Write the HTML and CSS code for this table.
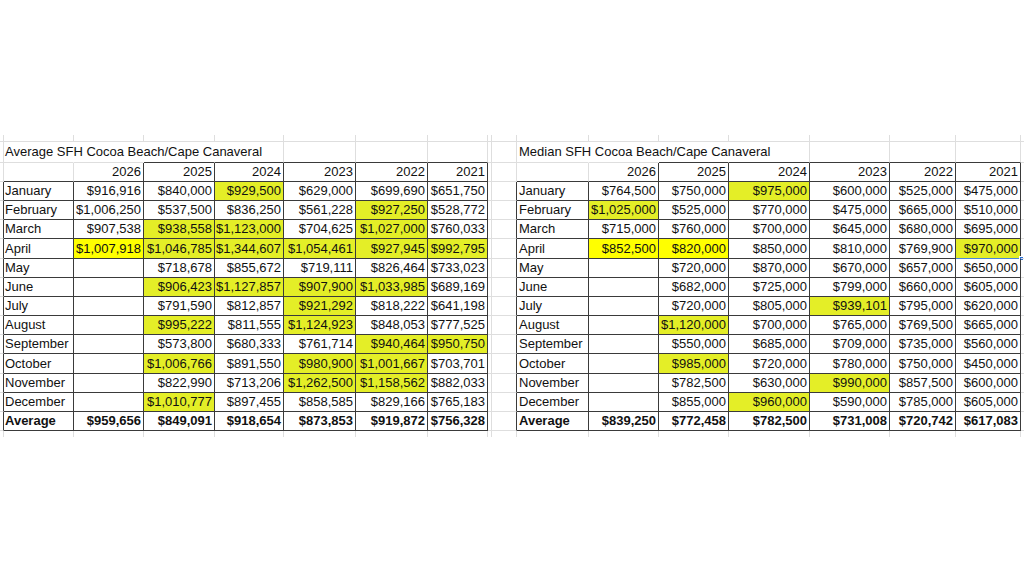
FILE: index.html
```html
<!DOCTYPE html>
<html>
<head>
<meta charset="utf-8">
<link rel="stylesheet" href="styles.css">
</head>
<body>
<div class="sheet">
  <div class="blk L">
    <div class="r s"><div></div><div></div><div></div><div></div><div></div><div></div><div></div><div></div><div></div></div>
    <div class="r t"><div></div><div>Average SFH Cocoa Beach/Cape Canaveral</div><div></div><div></div><div></div><div></div><div></div><div></div><div></div></div>
    <div class="r h"><div></div><div></div><div>2026</div><div>2025</div><div>2024</div><div>2023</div><div>2022</div><div>2021</div><div></div></div>
    <div class="r d"><div></div><div>January</div><div>$916,916</div><div>$840,000</div><div class="y">$929,500</div><div>$629,000</div><div>$699,690</div><div>$651,750</div><div></div></div>
    <div class="r d"><div></div><div>February</div><div>$1,006,250</div><div>$537,500</div><div>$836,250</div><div>$561,228</div><div class="y">$927,250</div><div>$528,772</div><div></div></div>
    <div class="r d"><div></div><div>March</div><div>$907,538</div><div class="y">$938,558</div><div class="y">$1,123,000</div><div>$704,625</div><div class="y">$1,027,000</div><div>$760,033</div><div></div></div>
    <div class="r d x"><div></div><div>April</div><div class="Y">$1,007,918</div><div class="y">$1,046,785</div><div class="y">$1,344,607</div><div class="y">$1,054,461</div><div class="y">$927,945</div><div class="y">$992,795</div><div></div></div>
    <div class="r d"><div></div><div>May</div><div></div><div>$718,678</div><div>$855,672</div><div>$719,111</div><div>$826,464</div><div>$733,023</div><div></div></div>
    <div class="r d"><div></div><div>June</div><div></div><div class="y">$906,423</div><div class="y">$1,127,857</div><div class="y">$907,900</div><div class="y">$1,033,985</div><div>$689,169</div><div></div></div>
    <div class="r d"><div></div><div>July</div><div></div><div>$791,590</div><div>$812,857</div><div class="y">$921,292</div><div>$818,222</div><div>$641,198</div><div></div></div>
    <div class="r d"><div></div><div>August</div><div></div><div class="y">$995,222</div><div>$811,555</div><div class="y">$1,124,923</div><div>$848,053</div><div>$777,525</div><div></div></div>
    <div class="r d"><div></div><div>September</div><div></div><div>$573,800</div><div>$680,333</div><div>$761,714</div><div class="y">$940,464</div><div class="y">$950,750</div><div></div></div>
    <div class="r d x"><div></div><div>October</div><div></div><div class="y">$1,006,766</div><div>$891,550</div><div class="y">$980,900</div><div class="y">$1,001,667</div><div>$703,701</div><div></div></div>
    <div class="r d"><div></div><div>November</div><div></div><div>$822,990</div><div>$713,206</div><div class="y">$1,262,500</div><div class="y">$1,158,562</div><div>$882,033</div><div></div></div>
    <div class="r d"><div></div><div>December</div><div></div><div class="y">$1,010,777</div><div>$897,455</div><div>$858,585</div><div>$829,166</div><div>$765,183</div><div></div></div>
    <div class="r d a"><div></div><div>Average</div><div>$959,656</div><div>$849,091</div><div>$918,654</div><div>$873,853</div><div>$919,872</div><div>$756,328</div><div></div></div>
    <div class="r e"><div></div><div></div><div></div><div></div><div></div><div></div><div></div><div></div><div></div></div>
  </div>
  <div class="blk R">
    <div class="r s"><div></div><div></div><div></div><div></div><div></div><div></div><div></div><div></div><div></div></div>
    <div class="r t"><div></div><div>Median SFH Cocoa Beach/Cape Canaveral</div><div></div><div></div><div></div><div></div><div></div><div></div><div></div></div>
    <div class="r h"><div></div><div></div><div>2026</div><div>2025</div><div>2024</div><div>2023</div><div>2022</div><div>2021</div><div></div></div>
    <div class="r d"><div></div><div>January</div><div>$764,500</div><div>$750,000</div><div class="y">$975,000</div><div>$600,000</div><div>$525,000</div><div>$475,000</div><div></div></div>
    <div class="r d"><div></div><div>February</div><div class="y">$1,025,000</div><div>$525,000</div><div>$770,000</div><div>$475,000</div><div>$665,000</div><div>$510,000</div><div></div></div>
    <div class="r d"><div></div><div>March</div><div>$715,000</div><div>$760,000</div><div>$700,000</div><div>$645,000</div><div>$680,000</div><div>$695,000</div><div></div></div>
    <div class="r d x"><div></div><div>April</div><div class="Y">$852,500</div><div class="Y">$820,000</div><div>$850,000</div><div>$810,000</div><div>$769,900</div><div class="y selb">$970,000<i class="hdl"></i></div><div></div></div>
    <div class="r d"><div></div><div>May</div><div></div><div>$720,000</div><div>$870,000</div><div>$670,000</div><div>$657,000</div><div>$650,000</div><div></div></div>
    <div class="r d"><div></div><div>June</div><div></div><div>$682,000</div><div>$725,000</div><div>$799,000</div><div>$660,000</div><div>$605,000</div><div></div></div>
    <div class="r d"><div></div><div>July</div><div></div><div>$720,000</div><div>$805,000</div><div class="y">$939,101</div><div>$795,000</div><div>$620,000</div><div></div></div>
    <div class="r d"><div></div><div>August</div><div></div><div class="y">$1,120,000</div><div>$700,000</div><div>$765,000</div><div>$769,500</div><div>$665,000</div><div></div></div>
    <div class="r d"><div></div><div>September</div><div></div><div>$550,000</div><div>$685,000</div><div>$709,000</div><div>$735,000</div><div>$560,000</div><div></div></div>
    <div class="r d x"><div></div><div>October</div><div></div><div class="y">$985,000</div><div>$720,000</div><div>$780,000</div><div>$750,000</div><div>$450,000</div><div></div></div>
    <div class="r d"><div></div><div>November</div><div></div><div>$782,500</div><div>$630,000</div><div class="y">$990,000</div><div>$857,500</div><div>$600,000</div><div></div></div>
    <div class="r d"><div></div><div>December</div><div></div><div>$855,000</div><div class="y">$960,000</div><div>$590,000</div><div>$785,000</div><div>$605,000</div><div></div></div>
    <div class="r d a"><div></div><div>Average</div><div>$839,250</div><div>$772,458</div><div>$782,500</div><div>$731,008</div><div>$720,742</div><div>$617,083</div><div></div></div>
    <div class="r e"><div></div><div></div><div></div><div></div><div></div><div></div><div></div><div></div><div></div></div>
  </div>
</div>
</body>
</html>
```

FILE: styles.css
```css
* { box-sizing: border-box; }
html, body { margin: 0; background: #fff; }
body {
  padding-top: 135px;
  font-family: "Liberation Sans", Arial, sans-serif;
  font-size: 13px;
  color: #111;
}
.sheet { display: flex; width: 1024px; overflow: hidden; }
.blk { flex: none; display: flex; flex-direction: column; }

.r { display: flex; height: 19px; line-height: 18px; }
.r > div {
  flex: none;
  position: relative;
  border-right: 1px solid #dedede;
  border-bottom: 1px solid #dedede;
  text-align: right;
  padding-right: 2px;
  white-space: nowrap;
}
.r > div:nth-child(2) { text-align: left; padding-left: 2px; padding-right: 0; }
.L .r > div:nth-child(2) { padding-left: 1px; }

/* column widths: left block */
.L .r > div:nth-child(1) { width: 4px; }
.L .r > div:nth-child(2) { width: 70px; }
.L .r > div:nth-child(3) { width: 70px; }
.L .r > div:nth-child(4) { width: 71px; }
.L .r > div:nth-child(5) { width: 69px; }
.L .r > div:nth-child(6) { width: 72px; }
.L .r > div:nth-child(7) { width: 72px; }
.L .r > div:nth-child(8) { width: 60px; }
.L .r > div:nth-child(9) { width: 4px; }

/* column widths: right block */
.R .r > div:nth-child(1) { width: 25px; }
.R .r > div:nth-child(2) { width: 72px; }
.R .r > div:nth-child(3) { width: 70px; }
.R .r > div:nth-child(4) { width: 70px; }
.R .r > div:nth-child(5) { width: 81px; }
.R .r > div:nth-child(6) { width: 80px; }
.R .r > div:nth-child(7) { width: 66px; }
.R .r > div:nth-child(8) { width: 65px; }
.R .r > div:nth-child(9) { width: 3px; border-right: none; }

/* row heights */
.s { height: 7px; }
.t { height: 21px; line-height: 20px; }
.x { height: 20px; line-height: 19px; }
.e { height: 6px; }
.e > div { border-bottom: none; }

/* title row: text overflows across month..2025 */
.t > div:nth-child(2),
.t > div:nth-child(3),
.t > div:nth-child(4) { border-right-color: transparent; }
.t > div:nth-child(n+4):nth-child(-n+8) { border-bottom-color: #3a3a3a; }

/* header row */
.h > div:nth-child(n+2):nth-child(-n+8) { border-bottom-color: #3a3a3a; }
.h > div:nth-child(n+3):nth-child(-n+8) { border-right-color: #3a3a3a; }

/* data rows */
.d > div:nth-child(-n+8) { border-right-color: #3a3a3a; }
.d > div:nth-child(n+2):nth-child(-n+8) { border-bottom-color: #3a3a3a; }

.a { font-weight: bold; }
.y { background: #e4ee27; }
.Y { background: #ffff00; }

.blk .d > div.selb { border-bottom-color: #4a86d8; }
.hdl {
  position: absolute;
  right: -4px;
  bottom: -3px;
  width: 5px;
  height: 5px;
  background: #2b6fd4;
  border: 1px solid #fff;
}
```
